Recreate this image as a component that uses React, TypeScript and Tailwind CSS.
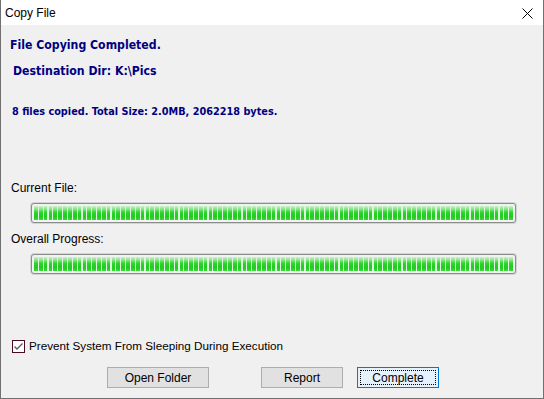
import React from "react";

const ProgressBar = () => (
  <div className="mx-[30px] h-[20px] w-[485px] rounded-[3px] border border-[#8c8c8c] bg-[#f2f2f2] p-[2px] shadow-[0_0_0_1px_#d4d4d4]">
    <div className="relative h-full bg-[linear-gradient(to_bottom,#c9f2c9_0%,#86e686_22%,#2fd42f_45%,#1fcc1f_75%,#3ad83a_100%)]">
      <div className="absolute inset-0 bg-[repeating-linear-gradient(to_right,transparent_0px,transparent_3.7px,#dff2df_3.7px,#dff2df_4.85px)]" />
    </div>
  </div>
);

export default function App() {
  return (
    <div className="flex h-[399px] w-[544px] flex-col border-x border-b border-[#707070] bg-[#f0f0f0] font-['Liberation_Sans',Arial,sans-serif] text-[12px] text-black">
      {/* title bar */}
      <div className="flex h-[25px] items-center justify-between bg-white pl-[4px] pr-[10px]">
        <span className="leading-none">Copy File</span>
        <svg width="11" height="11" viewBox="0 0 11 11" className="mt-[1px]">
          <path d="M0.5 0.5L10.5 10.5M10.5 0.5L0.5 10.5" stroke="#000" strokeWidth="1" />
        </svg>
      </div>

      <div className="flex flex-1 flex-col">
        <div className="mt-[12px] pl-[9px] font-['DejaVu_Sans_Condensed','DejaVu_Sans',sans-serif] text-[12.2px] font-bold leading-[16px] text-[#000080]">
          File Copying Completed.
        </div>
        <div className="mt-[10px] pl-[12px] font-['DejaVu_Sans_Condensed','DejaVu_Sans',sans-serif] text-[12.2px] font-bold leading-[16px] text-[#000080]">
          Destination Dir: K:\Pics
        </div>
        <div className="mt-[26px] pl-[11px] font-['DejaVu_Sans_Condensed','DejaVu_Sans',sans-serif] text-[10.8px] font-bold leading-[14px] text-[#000080]">
          8 files copied. Total Size: 2.0MB, 2062218 bytes.
        </div>

        <div className="mt-[61px] pl-[10px] leading-[16px]">Current File:</div>
        <div className="mt-[7px]">
          <ProgressBar />
        </div>
        <div className="mt-[8px] pl-[10px] leading-[16px]">Overall Progress:</div>
        <div className="mt-[7px]">
          <ProgressBar />
        </div>

        <div className="mt-[64px] flex items-center pl-[11px]">
          <div className="flex h-[13px] w-[13px] items-center justify-center border border-[#4a0a22] bg-white">
            <svg width="11" height="11" viewBox="0 0 11 11">
              <path d="M1.5 5.5L4 8L9.5 2.5" fill="none" stroke="#5a5a5a" strokeWidth="1.4" />
            </svg>
          </div>
          <span className="ml-[4px] text-[11.7px] leading-[16px]">Prevent System From Sleeping During Execution</span>
        </div>

        <div className="mt-[13px] flex items-center pl-[106px]">
          <button className="h-[21px] w-[102px] border border-[#adadad] bg-[#e1e1e1] leading-none">Open Folder</button>
          <button className="ml-[52px] h-[21px] w-[82px] border border-[#adadad] bg-[#e1e1e1] leading-none">Report</button>
          <button className="ml-[14px] flex h-[21px] w-[82px] items-center justify-center border border-[#0078d7] bg-[#e5f1fb] p-[2px]">
            <span className="flex h-full w-full items-center justify-center border border-dotted border-black leading-none">
              Complete
            </span>
          </button>
        </div>
      </div>
    </div>
  );
}
